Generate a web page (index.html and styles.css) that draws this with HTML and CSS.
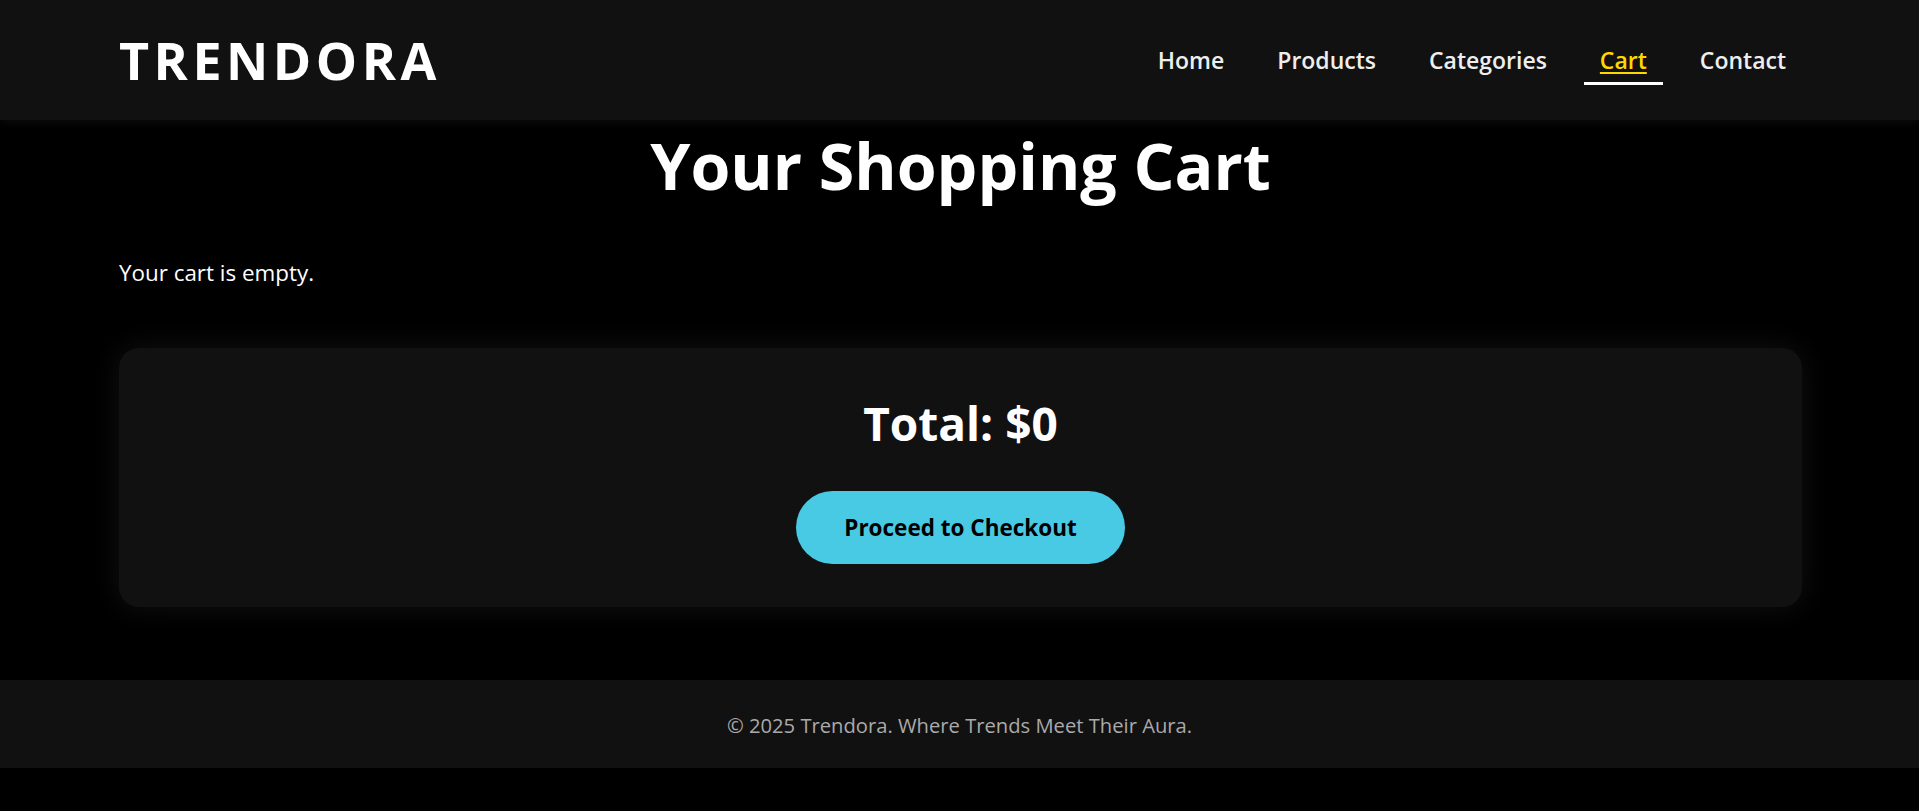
FILE: index.html
```html
<!DOCTYPE html>
<html lang="en">
<head>
<meta charset="utf-8">
<title>Trendora – Cart</title>
<link rel="stylesheet" href="styles.css">
</head>
<body>
<header class="site-header">
  <div class="logo">TRENDORA</div>
  <nav class="nav">
    <a class="nav-link" href="#">Home</a>
    <a class="nav-link" href="#">Products</a>
    <a class="nav-link" href="#">Categories</a>
    <a class="nav-link active" href="#">Cart</a>
    <a class="nav-link" href="#">Contact</a>
  </nav>
</header>
<main class="main">
  <h1 class="page-title">Your Shopping Cart</h1>
  <p class="empty-msg">Your cart is empty.</p>
  <section class="summary">
    <h2 class="total">Total: $0</h2>
    <button class="checkout-btn">Proceed to Checkout</button>
  </section>
</main>
<footer class="site-footer">
  <p class="footer-text">© 2025 Trendora. Where Trends Meet Their Aura.</p>
</footer>
</body>
</html>
```
FILE: styles.css
```css
* { box-sizing: border-box; }

body {
  margin: 0;
  background: #000;
  color: #fff;
  font-family: "Open Sans", "Noto Sans", sans-serif;
}

.site-header {
  height: 120px;
  background: #111;
  padding: 0 117px 0 119px;
  display: flex;
  align-items: center;
  justify-content: space-between;
  box-shadow: 0 2px 10px rgba(255, 255, 255, 0.05);
  position: relative;
  z-index: 1;
}

.logo {
  font-size: 52px;
  font-weight: 700;
  letter-spacing: 4.5px;
  color: #fff;
  line-height: 70px;
}

.nav {
  display: flex;
  gap: 21px;
  align-items: center;
  margin-top: 5px;
}

.nav-link {
  display: block;
  color: #eee;
  text-decoration: none;
  font-size: 23px;
  font-weight: 600;
  line-height: 31px;
  padding: 4px 16px 6px;
  border-bottom: 3px solid transparent;
}

.nav-link.active {
  color: #ffd700;
  text-decoration: underline;
  text-decoration-thickness: 2px;
  text-underline-offset: 3px;
  border-bottom-color: #fff;
}

.main {
  padding: 2px 117px 73px 119px;
}

.page-title {
  margin: 0;
  text-align: center;
  font-size: 64.5px;
  font-weight: 700;
  line-height: 87px;
}

.empty-msg {
  margin: 49px 0 0;
  font-size: 22.4px;
  line-height: 30px;
}

.summary {
  margin-top: 60px;
  background: #111;
  border-radius: 20px;
  padding: 43px 20px;
  display: flex;
  flex-direction: column;
  align-items: center;
  gap: 36px;
  box-shadow: 0 0 30px rgba(255, 255, 255, 0.07);
}

.total {
  margin: 0;
  font-size: 46px;
  font-weight: 700;
  line-height: 64px;
}

.checkout-btn {
  border: none;
  background: #48cae4;
  color: #000;
  font-family: inherit;
  font-size: 22.5px;
  font-weight: 700;
  line-height: 29px;
  padding: 22px 48px;
  border-radius: 40px;
  cursor: pointer;
}

.site-footer {
  background: #111;
  padding: 31px 20px 29px;
  text-align: center;
}

.footer-text {
  margin: 0;
  color: #aaa;
  font-size: 20.2px;
  line-height: 28px;
}
```
